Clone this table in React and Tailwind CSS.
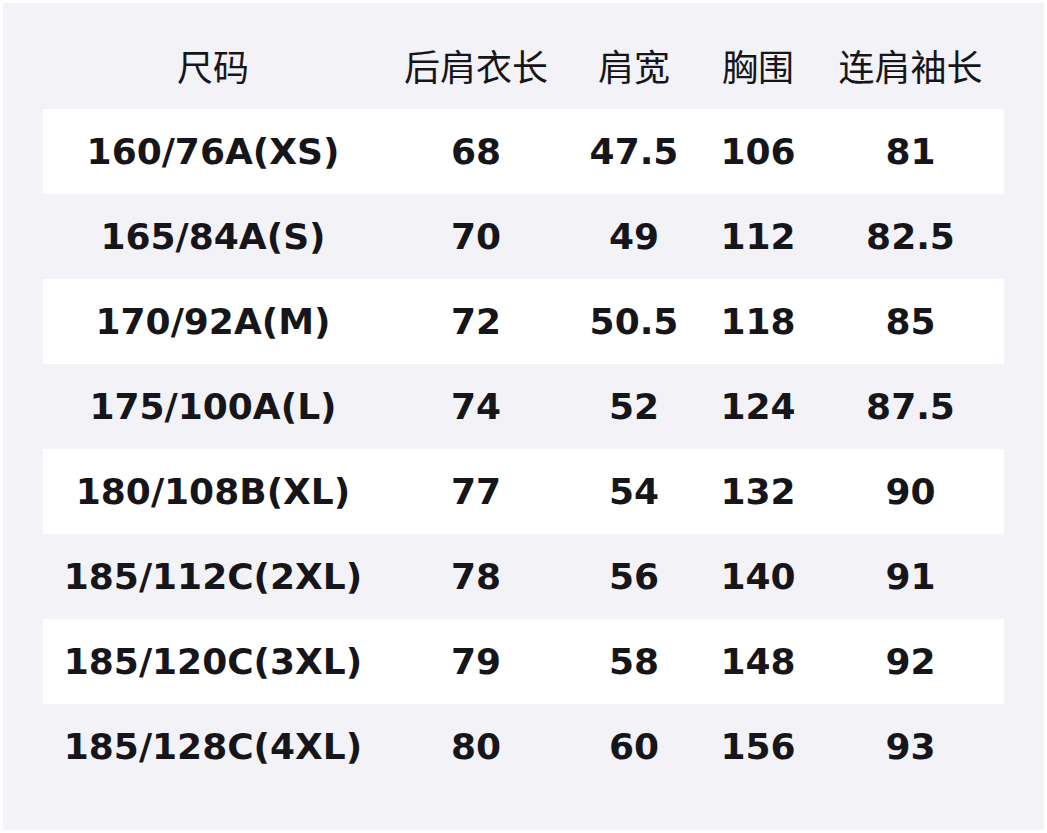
const HEAD = ['尺码', '后肩衣长', '肩宽', '胸围', '连肩袖长']

const ROWS = [
  ['160/76A(XS)', '68', '47.5', '106', '81'],
  ['165/84A(S)', '70', '49', '112', '82.5'],
  ['170/92A(M)', '72', '50.5', '118', '85'],
  ['175/100A(L)', '74', '52', '124', '87.5'],
  ['180/108B(XL)', '77', '54', '132', '90'],
  ['185/112C(2XL)', '78', '56', '140', '91'],
  ['185/120C(3XL)', '79', '58', '148', '92'],
  ['185/128C(4XL)', '80', '60', '156', '93'],
]

const COLS = 'grid grid-cols-[340px_186px_130px_118px_187px]'

export default function App() {
  return (
    <div className="bg-white w-[1047px] h-[833px] p-[3px]">
      <div className="bg-[#f2f2f7] w-[1041px] h-[827px] px-[40px] text-[#16161a]">
        {/* 表头 */}
        <div className={`${COLS} h-[106px] items-center pt-[18px] text-[36px] font-['Noto_Sans_CJK_SC',sans-serif]`}>
          {HEAD.map(h => (
            <div key={h} className="text-center">{h}</div>
          ))}
        </div>

        {/* 尺码行 */}
        {ROWS.map((r, i) => (
          <div key={r[0]}
            className={`${COLS} h-[85px] items-center text-[36px] font-bold font-['DejaVu_Sans',sans-serif] ${i % 2 === 0 ? 'bg-white' : ''}`}>
            {r.map((c, j) => (
              <div key={j} className="text-center">{c}</div>
            ))}
          </div>
        ))}
      </div>
    </div>
  )
}
